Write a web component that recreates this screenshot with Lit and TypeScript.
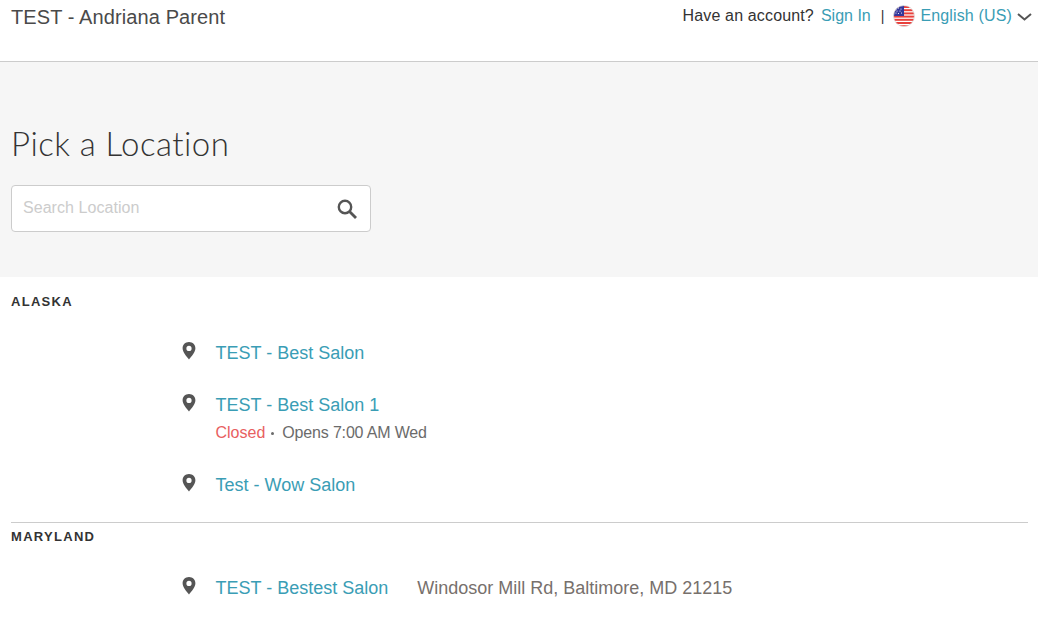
import { LitElement, html, css, svg } from "lit";
import { customElement } from "lit/decorators.js";

const pin = html`<svg class="pin" width="14" height="18" viewBox="0 0 14 18"><path fill="#555" fill-rule="evenodd" d="M7 0C3.2 0 .6 2.8.6 6.3.6 10 4.6 14.6 7 17.6c2.4-3 6.4-7.6 6.4-11.3C13.4 2.8 10.8 0 7 0zm0 3.8a2.6 2.6 0 1 1 0 5.2 2.6 2.6 0 0 1 0-5.2z"/></svg>`;

const flag = html`<svg class="flag" width="22" height="22" viewBox="0 0 22 22">
  <defs><clipPath id="c"><circle cx="11" cy="11" r="10.5"/></clipPath></defs>
  <g clip-path="url(#c)">
    <rect width="22" height="22" fill="#fff"/>
    ${[1, 4.2, 7.4, 10.6, 13.8, 17, 20.2].map((y) => svg`<rect x="0" y="${y}" width="22" height="2" fill="#e8413c"/>`)}
    <rect width="11" height="11" fill="#34379a"/>
    ${[[3, 4], [5.5, 3], [8, 4], [4, 6], [7, 6], [3, 8], [5.5, 8.5], [8.5, 8]].map(([x, y]) => svg`<circle cx="${x}" cy="${y}" r=".6" fill="#fff"/>`)}
  </g>
  <circle cx="11" cy="11" r="10.5" fill="none" stroke="#ddd" stroke-width=".8"/>
</svg>`;

@customElement("app-root")
export class AppRoot extends LitElement {
  static styles = css`
    :host {
      display: block;
      font-family: "Liberation Sans", Arial, sans-serif;
      color: #333;
      background: #fff;
      height: 632px;
      overflow: hidden;
    }
    a { color: #3a9db5; text-decoration: none; }
    .top {
      height: 61px;
      border-bottom: 1px solid #ccc;
      display: flex;
      justify-content: space-between;
      align-items: flex-start;
      padding: 0 6px 0 11px;
    }
    .brand { font-size: 20px; line-height: 23px; padding-top: 6px; color: #4a4a4a; letter-spacing: .1px; }
    .account {
      display: flex;
      align-items: center;
      font-size: 16px;
      height: 22px;
      padding-top: 5px;
    }
    .account .q { color: #333; margin-right: 7px; letter-spacing: .15px; }
    .sep { margin: 0 9px 0 10px; font-size: 14px; color: #333; }
    .flag { margin-right: 5px; }
    .lang { letter-spacing: .15px; }
    .chev { margin-left: 5px; margin-top: 1px; }
    .hero {
      background: #f6f6f6;
      height: 215px;
      padding: 62px 0 0 11px;
      box-sizing: border-box;
    }
    h1 {
      margin: 0;
      font-family: Lato, sans-serif;
      font-weight: 300;
      font-size: 33px;
      line-height: 38px;
      letter-spacing: .45px;
      color: #333;
    }
    .search {
      margin-top: 23px;
      width: 360px;
      height: 47px;
      box-sizing: border-box;
      background: #fff;
      border: 1px solid #ccc;
      border-radius: 4px;
      display: flex;
      align-items: center;
      justify-content: space-between;
      padding: 0 12px 2px 11px;
      font-size: 16px;
      color: #ccc;
    }
    .search span { letter-spacing: .05px; }
    .search svg { margin-top: 2px; }
    .region { font-size: 13px; font-weight: 700; letter-spacing: 1.3px; color: #333; line-height: 15px; }
    .region.first { padding: 17px 0 0 11px; }
    .region.second { padding: 6px 0 0 11px; }
    .rule { margin: 0 10px 0 11px; border: 0; border-top: 1px solid #ccc; }
    .list { padding-left: 182px; }
    .list.a { padding-top: 33px; height: 213px; box-sizing: border-box; }
    .list.b { padding-top: 33px; }
    .row { display: flex; align-items: flex-start; font-size: 18px; line-height: 22px; }
    .row + .row { margin-top: 30px; }
    .row + .row + .row { margin-top: 31px; }
    .pin { margin-right: 19.5px; flex: none; }
    .status { font-size: 16px; line-height: 20px; margin-top: 7px; color: #6b6b6b; }
    .closed { color: #e8605f; }
    .dot { display: inline-block; width: 3px; height: 3px; border-radius: 50%; background: #6b6b6b; margin: 0 8px 3px 6px; }
    .hours { letter-spacing: -.17px; }
    .addr { color: #77706c; margin-left: 29px; }
  `;

  render() {
    return html`
      <div class="top">
        <div class="brand">TEST - Andriana Parent</div>
        <div class="account">
          <span class="q">Have an account?</span><a>Sign In</a><span class="sep">|</span>
          ${flag}<a class="lang">English (US)</a>
          <svg class="chev" width="15" height="8" viewBox="0 0 15 8"><path d="M1 1l6.5 5.5L14 1" fill="none" stroke="#555" stroke-width="2"/></svg>
        </div>
      </div>
      <section class="hero">
        <h1>Pick a Location</h1>
        <div class="search">
          <span>Search Location</span>
          <svg width="22" height="22" viewBox="0 0 22 22"><circle cx="9" cy="9" r="6.2" fill="none" stroke="#555" stroke-width="2.4"/><path d="M13.5 13.5l6.5 6.5" stroke="#555" stroke-width="2.8" fill="none"/></svg>
        </div>
      </section>
      <div class="region first">ALASKA</div>
      <div class="list a">
        <div class="row">${pin}<a>TEST - Best Salon</a></div>
        <div class="row">${pin}<div><a>TEST - Best Salon 1</a><div class="status"><span class="closed">Closed</span><span class="dot"></span><span class="hours">Opens 7:00 AM Wed</span></div></div></div>
        <div class="row">${pin}<a>Test - Wow Salon</a></div>
      </div>
      <hr class="rule" />
      <div class="region second">MARYLAND</div>
      <div class="list b">
        <div class="row">${pin}<a>TEST - Bestest Salon</a><span class="addr">Windosor Mill Rd, Baltimore, MD 21215</span></div>
      </div>
    `;
  }
}
